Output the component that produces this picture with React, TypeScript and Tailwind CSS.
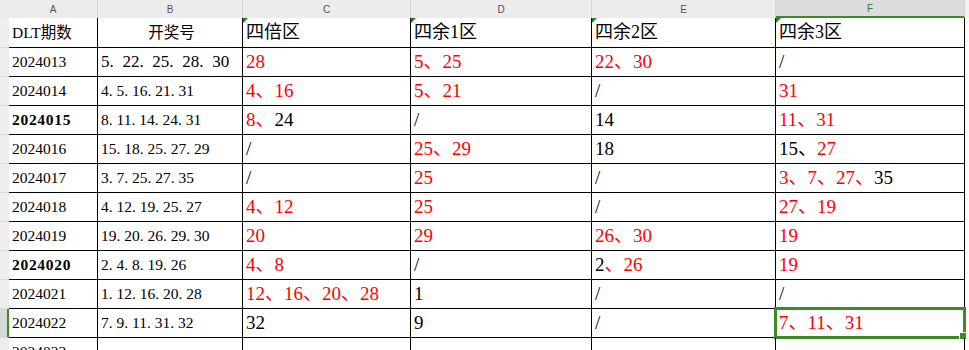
import * as React from "react";
import clsx from "clsx";

type Part = { t: string; red?: boolean };
type Row = {
  id: string;
  bold?: boolean;
  nums: string;
  zones: Part[][];
};

const r = (t: string): Part => ({ t, red: true });
const k = (t: string): Part => ({ t });

const rows: Row[] = [
  { id: "2024013", nums: "5.22.25.28.30", zones: [[r("28")], [r("5、25")], [r("22、30")], [k("/")]] },
  { id: "2024014", nums: "4.5.16.21.31", zones: [[r("4、16")], [r("5、21")], [k("/")], [r("31")]] },
  { id: "2024015", bold: true, nums: "8.11.14.24.31", zones: [[r("8、"), k("24")], [k("/")], [k("14")], [r("11、31")]] },
  { id: "2024016", nums: "15.18.25.27.29", zones: [[k("/")], [r("25、29")], [k("18")], [k("15、"), r("27")]] },
  { id: "2024017", nums: "3.7.25.27.35", zones: [[k("/")], [r("25")], [k("/")], [r("3、7、27、"), k("35")]] },
  { id: "2024018", nums: "4.12.19.25.27", zones: [[r("4、12")], [r("25")], [k("/")], [r("27、19")]] },
  { id: "2024019", nums: "19.20.26.29.30", zones: [[r("20")], [r("29")], [r("26、30")], [r("19")]] },
  { id: "2024020", bold: true, nums: "2.4.8.19.26", zones: [[r("4、8")], [k("/")], [k("2"), r("、26")], [r("19")]] },
  { id: "2024021", nums: "1.12.16.20.28", zones: [[r("12、16、20、28")], [k("1")], [k("/")], [k("/")]] },
  { id: "2024022", nums: "7.9.11.31.32", zones: [[k("32")], [k("9")], [k("/")], [r("7、11、31")]] },
  { id: "2024023", nums: "", zones: [[], [], [], []] },
];

const zoneWidths = ["w-[168px]", "w-[181px]", "w-[184px]", "w-[189px]"];
const zoneTitles = ["四倍区", "四余1区", "四余2区", "四余3区"];
const letters = [
  { l: "A", w: "w-[89px]" },
  { l: "B", w: "w-[145px]" },
  { l: "C", w: "w-[168px]" },
  { l: "D", w: "w-[181px]" },
  { l: "E", w: "w-[184px]" },
  { l: "F", w: "w-[189px]" },
];

function Dotted({ value, dot }: { value: string; dot: string }) {
  const parts = value.split(".");
  return (
    <span>
      {parts.map((p, i) => (
        <React.Fragment key={i}>
          {p}
          {i < parts.length - 1 && <span className={clsx("inline-block", dot)}>.</span>}
        </React.Fragment>
      ))}
    </span>
  );
}

function Cell({
  w,
  className,
  children,
}: {
  w: string;
  className?: string;
  children?: React.ReactNode;
}) {
  return (
    <div
      className={clsx(
        "relative flex shrink-0 items-center whitespace-nowrap border-b border-r border-black pl-[3px]",
        w,
        className
      )}
    >
      {children}
    </div>
  );
}

function Gutter({ active }: { active?: boolean }) {
  return (
    <div
      className={clsx(
        "w-[9px] shrink-0 border-b border-[#d9d9d9]",
        active ? "border-r-2 border-r-[#3d8b26] bg-[#d9d9d9]" : "bg-[#ededed]"
      )}
    />
  );
}

function Flag() {
  return (
    <span className="absolute left-0 top-0 h-0 w-0 border-r-[5px] border-t-[5px] border-r-transparent border-t-[#23801f]" />
  );
}

export default function App() {
  return (
    <div className="h-[350px] w-[969px] overflow-hidden bg-white font-['Liberation_Serif','Noto_Sans_CJK_SC',serif] text-black">
      {/* column letters */}
      <div className="flex h-[18px] bg-[#f2f2f2] font-['Liberation_Sans',sans-serif] text-[10px]">
        <div className="w-[9px] shrink-0 bg-[#ececec]" />
        {letters.map(({ l, w }) => (
          <div
            key={l}
            className={clsx(
              "flex shrink-0 items-center justify-center border-r",
              w,
              l === "F"
                ? "border-b-2 border-r-[#d0d0d0] border-b-[#3d8b26] bg-[#dcdcdc] text-[#2f7d1f]"
                : "border-[#d4d4d4] bg-[#ececec] text-[#555]"
            )}
          >
            {l}
          </div>
        ))}
        <div className="flex-1" />
      </div>

      {/* title row */}
      <div className="flex h-[30px]">
        <Gutter />
        <Cell w="w-[89px]" className="text-[15.5px]">
          DLT期数
        </Cell>
        <Cell w="w-[145px]" className="justify-center pl-0 text-[15.5px]">
          开奖号
        </Cell>
        {zoneTitles.map((t, i) => (
          <Cell key={t} w={zoneWidths[i]} className="text-[18px]">
            <Flag />
            {t}
          </Cell>
        ))}
        <div className="flex-1" />
      </div>

      {rows.map((row, ri) => {
        const selected = row.id === "2024022";
        return (
          <div key={row.id} className="flex h-[29px]">
            <Gutter active={selected} />
            <Cell
              w="w-[89px]"
              className={clsx("text-[15.5px]", row.bold && "font-bold tracking-[0.7px]")}
            >
              {row.id}
            </Cell>
            <Cell w="w-[145px]" className={ri === 0 ? "text-[17px]" : "text-[15.5px]"}>
              {row.nums && (
                <Dotted value={row.nums} dot={ri === 0 ? "w-[0.76em]" : "w-[0.5em]"} />
              )}
            </Cell>
            {row.zones.map((parts, zi) => (
              <Cell key={zi} w={zoneWidths[zi]} className="text-[19px]">
                {parts.map((p, pi) => (
                  <span key={pi} className={p.red ? "text-[#ff0000]" : "text-black"}>
                    {p.t}
                  </span>
                ))}
                {selected && zi === 3 && (
                  <div className="absolute -left-[2px] -top-[2px] h-[32px] w-[192px] border-[3px] border-[#3d8b26]">
                    <div className="absolute -bottom-[4px] -right-[4px] h-[8px] w-[8px] border border-white bg-[#3d8b26]" />
                  </div>
                )}
              </Cell>
            ))}
            <div className="flex-1" />
          </div>
        );
      })}
    </div>
  );
}
